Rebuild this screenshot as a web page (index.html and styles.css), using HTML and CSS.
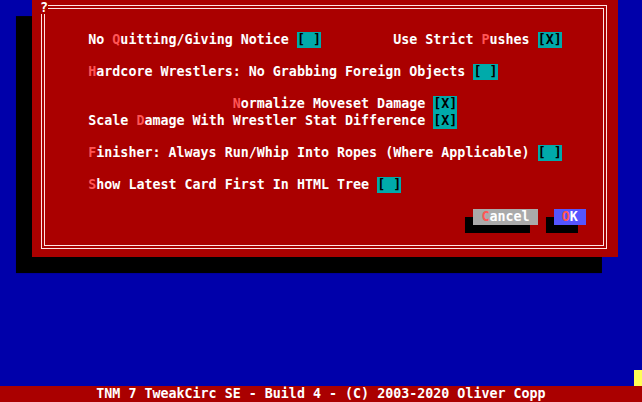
FILE: index.html
```html
<!DOCTYPE html>
<html lang="en">
<head>
  <meta charset="UTF-8">
  <title>TNM 7 TweakCirc SE</title>
  <link rel="stylesheet" href="styles.css">
</head>
<body>
  <div class="screen">
    <div class="desktop">
      <!-- Options dialog -->
      <div class="dialog">
        <span class="dlg-title">?</span>
        <div class="row">
          <span class="opt">No <span class="hot">Q</span>uitting/Giving Notice <span class="chk">[ ]</span></span>
          <span class="opt right">Use Strict <span class="hot">P</span>ushes <span class="chk">[X]</span></span>
        </div>
        <div class="row spaced">
          <span class="opt"><span class="hot">H</span>ardcore Wrestlers: No Grabbing Foreign Objects <span class="chk">[ ]</span></span>
        </div>
        <div class="row spaced">
          <span class="opt indent"><span class="hot">N</span>ormalize Moveset Damage <span class="chk">[X]</span></span>
        </div>
        <div class="row">
          <span class="opt">Scale <span class="hot">D</span>amage With Wrestler Stat Difference <span class="chk">[X]</span></span>
        </div>
        <div class="row spaced">
          <span class="opt"><span class="hot">F</span>inisher: Always Run/Whip Into Ropes (Where Applicable) <span class="chk">[ ]</span></span>
        </div>
        <div class="row spaced">
          <span class="opt"><span class="hot">S</span>how Latest Card First In HTML Tree <span class="chk">[ ]</span></span>
        </div>
        <div class="row spaced buttons">
          <span class="btn btn-cancel"><span class="hot">C</span>ancel</span>
          <span class="btn btn-ok"><span class="hot">O</span>K</span>
        </div>
      </div>
    </div>
    <div class="status">TNM 7 TweakCirc SE - Build 4 - (C) 2003-2020 Oliver Copp</div>
    <span class="cursor"></span>
  </div>
</body>
</html>
```
FILE: styles.css
```css
:root {
  --r: 16.08px;
}
body {
  margin: 0;
  background: #0000aa;
  font-family: "DejaVu Sans Mono", monospace;
  font-size: 13.33px;
  font-weight: bold;
  line-height: var(--r);
  color: #fff;
}
.screen {
  position: relative;
  width: 642px;
  height: 402px;
  display: flex;
  flex-direction: column;
  overflow: hidden;
}
.desktop {
  flex: 1;
  padding-left: 4ch;
}
.dialog {
  position: relative;
  box-sizing: border-box;
  width: 73ch;
  height: calc(var(--r) * 16);
  padding: calc(var(--r) * 2) 0 0 7ch;
  background: #aa0000;
  box-shadow: -2ch var(--r) 0 #000;
}
/* double line frame */
.dialog::before {
  content: "";
  position: absolute;
  left: 9px;
  top: 5px;
  right: 11px;
  bottom: 8px;
  border: 1px solid #ffe2e2;
  box-shadow: inset 0 0 0 2px #aa0000, inset 0 0 0 3px #ffe2e2;
}
.dlg-title {
  position: absolute;
  left: 1ch;
  top: 0;
  width: 1ch;
  height: 14px;
  background: #aa0000;
}
.row {
  display: flex;
  height: var(--r);
  white-space: pre;
}
.spaced {
  margin-top: var(--r);
}
.right {
  margin-left: 9ch;
}
.indent {
  margin-left: 18ch;
}
.hot {
  color: #ff5555;
}
.chk {
  display: inline-block;
  height: var(--r);
  background: #00aaaa;
  color: #000;
}
.buttons {
  margin-left: 48ch;
  gap: 2ch;
}
.btn {
  height: var(--r);
  padding: 0 1ch;
  box-shadow: -1ch 8px 0 #000;
}
.btn-cancel {
  background: #aaaaaa;
}
.btn-ok {
  background: #5555ff;
}
.status {
  height: var(--r);
  padding-left: 12ch;
  background: #aa0000;
  white-space: pre;
}
.cursor {
  position: absolute;
  right: 0;
  bottom: var(--r);
  width: 1ch;
  height: var(--r);
  background: #ffff55;
}
```
